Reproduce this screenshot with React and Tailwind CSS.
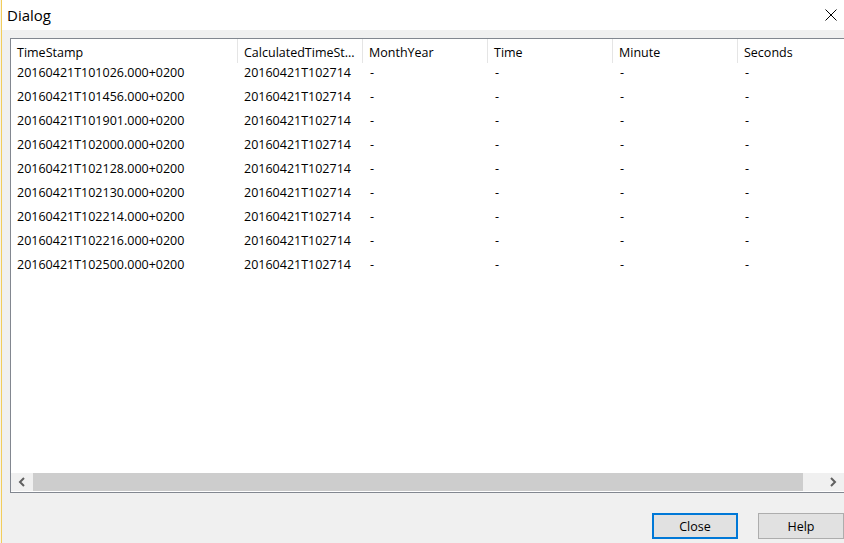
import React from "react";

const rows = [
  "20160421T101026.000+0200",
  "20160421T101456.000+0200",
  "20160421T101901.000+0200",
  "20160421T102000.000+0200",
  "20160421T102128.000+0200",
  "20160421T102130.000+0200",
  "20160421T102214.000+0200",
  "20160421T102216.000+0200",
  "20160421T102500.000+0200",
];

const headers = ["TimeStamp", "CalculatedTimeSt...", "MonthYear", "Time", "Minute", "Seconds"];
const widths = ["w-[227px]", "w-[125px]", "w-[125px]", "w-[125px]", "w-[125px]", "w-[125px]"];

export default function App() {
  return (
    <div
      className="w-[844px] h-[543px] flex bg-[#f0f0f0] overflow-hidden text-black"
      style={{ fontFamily: '"Open Sans", "Noto Sans", sans-serif' }}
    >
      <div className="w-[1px] h-full bg-[#f7f3e6]" />
      <div className="w-[1px] h-full bg-[#f2cd5c]" />
      <div className="flex-1 flex flex-col min-w-0">
        {/* Title bar */}
        <div className="h-[30px] bg-white flex items-center justify-between shrink-0">
          <span className="pl-[5px] text-[15px] leading-[20px]">Dialog</span>
          <svg width="12" height="12" viewBox="0 0 12 12" className="mr-[7px]">
            <path d="M0.5 0.5 L11.5 11.5 M11.5 0.5 L0.5 11.5" stroke="#000" strokeWidth="1" fill="none" />
          </svg>
        </div>

        {/* List box */}
        <div className="mt-[8px] ml-[8px] w-[835px] h-[455px] border border-[#828790] bg-white flex flex-col shrink-0">
          <div className="flex-1 flex flex-col text-[12.5px] overflow-hidden">
            <div className="flex h-[24px] shrink-0">
              {headers.map((h, i) => (
                <div
                  key={h}
                  className={`${widths[i]} shrink-0 h-[24px] pt-[2px] border-r border-[#e5e5e5] pl-[6px] leading-[23px] whitespace-nowrap overflow-hidden`}
                >
                  {h}
                </div>
              ))}
            </div>
            {rows.map((r) => (
              <div key={r} className="flex h-[24px] shrink-0 leading-[19px]">
                <div className="w-[227px] shrink-0 pl-[6px] whitespace-nowrap">{r}</div>
                <div className="w-[126px] shrink-0 pl-[6px] whitespace-nowrap">20160421T102714</div>
                <div className="w-[125px] shrink-0 pl-[6px]">-</div>
                <div className="w-[125px] shrink-0 pl-[6px]">-</div>
                <div className="w-[125px] shrink-0 pl-[6px]">-</div>
                <div className="w-[125px] shrink-0 pl-[6px]">-</div>
              </div>
            ))}
          </div>
          {/* Horizontal scrollbar */}
          <div className="h-[18px] flex bg-[#f0f0f0] shrink-0 mb-[1px]">
            <div className="w-[22px] h-full flex items-center justify-center">
              <svg width="8" height="10" viewBox="0 0 8 10">
                <path d="M6 1 L2 5 L6 9" stroke="#606060" strokeWidth="2" fill="none" />
              </svg>
            </div>
            <div className="w-[770px] h-full bg-[#cdcdcd]" />
            <div className="flex-1" />
            <div className="w-[22px] h-full flex items-center justify-center">
              <svg width="8" height="10" viewBox="0 0 8 10">
                <path d="M2 1 L6 5 L2 9" stroke="#606060" strokeWidth="2" fill="none" />
              </svg>
            </div>
          </div>
        </div>

        {/* Buttons */}
        <div className="flex justify-end gap-[20px] mt-[20px] text-[12.5px]">
          <button className="w-[86px] h-[26px] bg-[#e1e1e1] border-2 border-[#0078d7] pt-[1px] leading-[20px]">
            Close
          </button>
          <button className="w-[86px] h-[26px] bg-[#e1e1e1] border border-[#adadad] pt-[1px] leading-[22px]">
            Help
          </button>
        </div>
      </div>
    </div>
  );
}
